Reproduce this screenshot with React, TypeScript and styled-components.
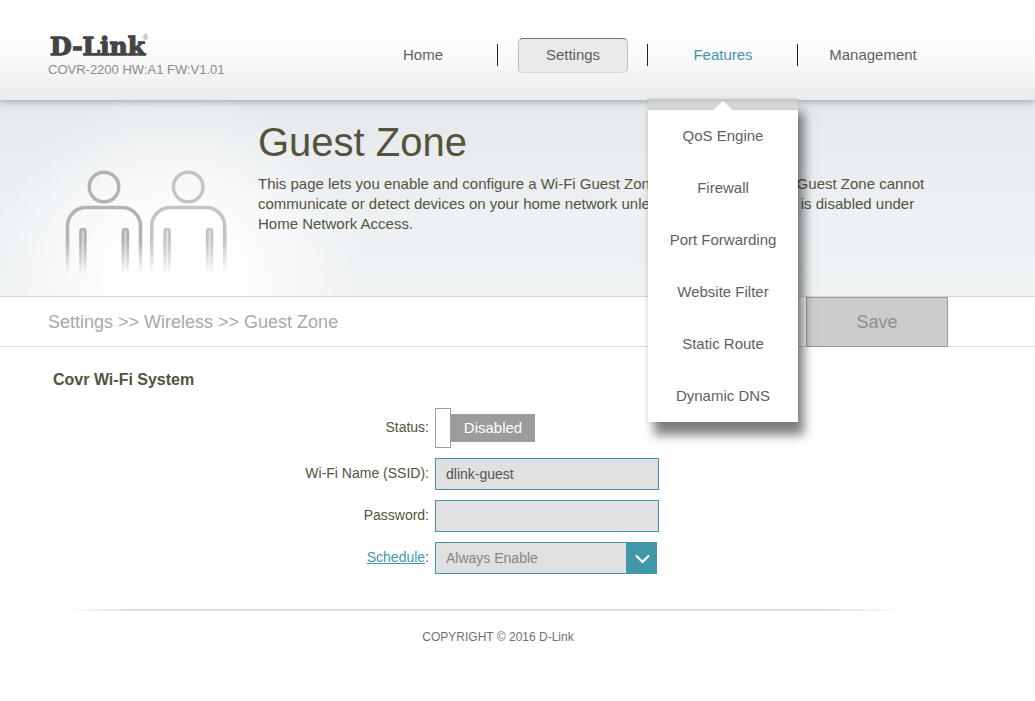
import React, { useState } from "react";
import styled, { createGlobalStyle } from "styled-components";

const TEAL = "#4297a9";
const OLIVE = "#54533c";

const GlobalStyle = createGlobalStyle`
  *, *::before, *::after { box-sizing: border-box; }
  body {
    margin: 0;
    background: #fff;
    color: ${OLIVE};
    font-family: "Liberation Sans", Arial, Helvetica, sans-serif;
    font-size: 14px;
  }
`;

const Inner = styled.div`
  max-width: 948px;
  padding-left: 48px;
`;

const Header = styled.header`
  position: relative;
  z-index: 2;
  background: linear-gradient(#fff 30%, #f9f9f9 60%, #ebebeb);
  box-shadow: 0 0 8px rgba(60, 70, 70, 0.6);
`;

const HeaderRow = styled(Inner)`
  display: flex;
  justify-content: space-between;
  height: 100px;
`;

const Brand = styled.div`
  padding-top: 28px;
`;

const Logo = styled.svg`
  display: block;
  width: 110px;
  height: 32px;
  overflow: visible;
`;

const Version = styled.div`
  color: #8c8c8c;
  font-size: 13px;
  line-height: 20px;
`;

const NavList = styled.ul`
  display: flex;
  margin: 0;
  padding: 38px 0 0;
  list-style: none;
`;

const NavItem = styled.li`
  position: relative;
  display: flex;
  justify-content: center;
  width: 150px;
  height: 35px;

  & + &::before {
    content: "";
    position: absolute;
    left: -1px;
    top: 6px;
    width: 1px;
    height: 22px;
    background: #222;
  }
`;

const NavLink = styled.a<{ $state?: "current" | "open" }>`
  width: 110px;
  height: 35px;
  border: 1px solid transparent;
  border-radius: 5px;
  color: ${(p) => (p.$state === "open" ? TEAL : "#5f5f5f")};
  font-size: 15px;
  line-height: 31px;
  text-align: center;
  text-decoration: none;
  ${(p) =>
    p.$state === "current" &&
    `background: #e9ebea;
     border-color: #707070 #bdbdbd #d8d8d8;`}
`;

const Menu = styled.div`
  position: absolute;
  top: 61px;
  left: 0;
  width: 150px;
  padding-top: 11px;
  background: linear-gradient(#c0c4c4, #d9dcdd 7px, #cdd0d1 11px);
  box-shadow: 6px 13px 10px rgba(0, 0, 0, 0.5), 0 0 4px rgba(0, 0, 0, 0.1);

  &::before {
    content: "";
    position: absolute;
    top: 2px;
    left: 64px;
    border: solid transparent;
    border-width: 0 11px 10px;
    border-bottom-color: #fff;
  }
`;

const MenuList = styled.ul`
  margin: 0;
  padding: 0;
  background: #fff;
  list-style: none;
`;

const MenuLink = styled.a`
  display: block;
  color: #5f5f5f;
  font-size: 15px;
  line-height: 52px;
  text-align: center;
  text-decoration: none;
`;

const Hero = styled.section`
  background:
    radial-gradient(ellipse 190px 190px at 175px 180px, #fff 25%, rgba(255, 255, 255, 0) 100%),
    linear-gradient(#e5e9eb, #edf1f4 60%, #eff2f3);
`;

const HeroRow = styled(Inner)`
  display: grid;
  grid-template-columns: 210px 1fr;
  min-height: 196px;
`;

const Guests = styled.svg`
  width: 190px;
  height: 120px;
  margin-top: 60px;
`;

const Title = styled.h1`
  margin: 18px 0 8px;
  font-size: 40px;
  font-weight: 400;
  line-height: 48px;
`;

const Intro = styled.p`
  margin: 0;
  font-size: 15px;
  line-height: 20px;
`;

const CrumbBar = styled.div`
  height: 51px;
  border-top: 1px solid #cfd6d5;
  border-bottom: 1px solid #dcdcdc;
`;

const CrumbRow = styled(Inner)`
  display: flex;
  justify-content: space-between;
`;

const Crumbs = styled.nav`
  color: #a9a9a9;
  font-size: 18px;
  line-height: 50px;
`;

const SaveButton = styled.button`
  width: 142px;
  height: 50px;
  border: 1px solid #9b9b9b;
  background: #ccc;
  color: #8e8e8e;
  font-family: inherit;
  font-size: 18px;
`;

const Form = styled.form`
  padding: 24px 0 0 5px;
`;

const FormTitle = styled.h2`
  margin: 0 0 19px;
  font-size: 16px;
  line-height: 18px;
`;

const Fields = styled.div`
  display: grid;
  grid-template-columns: 376px 1fr;
  align-items: center;
  gap: 10px 6px;
`;

const FieldLabel = styled.label`
  padding-bottom: 2px;
  line-height: 18px;
  text-align: right;
`;

const HelpLink = styled.a`
  color: ${TEAL};
`;

const Toggle = styled.div`
  display: flex;
  align-items: center;
`;

const Knob = styled.input`
  appearance: none;
  width: 16px;
  height: 40px;
  margin: 0;
  border: 1px solid #a0a0a0;
  background: #fff;
`;

const Track = styled.span`
  width: 84px;
  background: #9c9c9c;
  color: #fff;
  font-size: 15px;
  line-height: 28px;
  text-align: center;
`;

const TextInput = styled.input`
  width: 224px;
  height: 32px;
  padding: 0 10px;
  border: 1px solid ${TEAL};
  border-radius: 0;
  background: #e0e0e0;
  color: #54544e;
  font: inherit;
`;

const SelectBox = styled.div`
  display: flex;
  width: 222px;
  height: 32px;
  border: 1px solid ${TEAL};
  background: linear-gradient(to left, ${TEAL} 30px, #e0e0e0 30px);
`;

const Select = styled.select`
  appearance: none;
  flex: 1;
  padding: 0 10px;
  border: 0;
  background: transparent;
  color: #858585;
  font: inherit;
`;

const Chevron = styled.svg`
  width: 30px;
  height: 30px;
`;

const Footer = styled.footer`
  margin-top: 35px;
  color: #6f6f6f;
  font-size: 12px;
  line-height: 16px;
  text-align: center;

  &::before {
    content: "";
    display: block;
    height: 2px;
    margin: 0 40px 18px 17px;
    background: linear-gradient(to right, transparent, #dedede 8%, #dedede 90%, transparent);
  }
`;

const featureLinks = [
  "QoS Engine",
  "Firewall",
  "Port Forwarding",
  "Website Filter",
  "Static Route",
  "Dynamic DNS",
];

function Person({ x, color, fade }: { x: number; color: string; fade: string }) {
  return (
    <g transform={`translate(${x} 0)`} fill="none">
      <circle cx="39.5" cy="27" r="14.8" stroke={color} strokeWidth="3.4" />
      <g stroke={`url(#${fade})`} strokeWidth="3.6">
        <path d="M3 114V66A18.500 18.500 0 0 1 21.500 47.500H57.500A18.500 18.500 0 0 1 76 66V114" />
        <g strokeWidth="2.8" fill={`url(#${fade})`} fillOpacity="0.5">
          <path d="M16 114V71.500A2.400 2.400 0 0 1 20.800 71.500V114" />
          <path d="M58.500 114V71.500A2.400 2.400 0 0 1 63.300 71.500V114" />
        </g>
      </g>
      <defs>
        <linearGradient id={fade} gradientUnits="userSpaceOnUse" x1="0" y1="46" x2="0" y2="114">
          <stop offset="0" stopColor={color} />
          <stop offset="0.5" stopColor={color} />
          <stop offset="1" stopColor={color} stopOpacity="0" />
        </linearGradient>
      </defs>
    </g>
  );
}

export default function App() {
  const [ssid, setSsid] = useState("dlink-guest");
  const [password, setPassword] = useState("");
  const [enabled, setEnabled] = useState(false);

  return (
    <>
      <GlobalStyle />
      <Header>
        <HeaderRow>
          <Brand>
            <Logo viewBox="0 0 110 32" role="img" aria-label="D-Link">
              <text
                x="2"
                y="27"
                fill="#444"
                stroke="#444"
                strokeWidth="1.3"
                fontFamily="DejaVu Serif, serif"
                fontWeight="700"
                fontSize="25"
              >
                D-Link
              </text>
              <text x="95" y="12" fill="#777" fontSize="7">
                ®
              </text>
            </Logo>
            <Version>COVR-2200 HW:A1 FW:V1.01</Version>
          </Brand>
          <nav aria-label="Main">
            <NavList>
              <NavItem>
                <NavLink href="#home">Home</NavLink>
              </NavItem>
              <NavItem>
                <NavLink href="#settings" $state="current">
                  Settings
                </NavLink>
              </NavItem>
              <NavItem>
                <NavLink href="#features" $state="open">
                  Features
                </NavLink>
                <Menu>
                  <MenuList>
                    {featureLinks.map((name) => (
                      <li key={name}>
                        <MenuLink href="#features">{name}</MenuLink>
                      </li>
                    ))}
                  </MenuList>
                </Menu>
              </NavItem>
              <NavItem>
                <NavLink href="#management">Management</NavLink>
              </NavItem>
            </NavList>
          </nav>
        </HeaderRow>
      </Header>

      <Hero>
        <HeroRow>
          <Guests viewBox="0 0 190 120" aria-hidden="true">
            <Person x={16.5} color="#b2b2b2" fade="fadeFront" />
            <Person x={100.7} color="#c4c4c4" fade="fadeBack" />
          </Guests>
          <div>
            <Title>Guest Zone</Title>
            <Intro>
              This page lets you enable and configure a Wi-Fi Guest Zone. Devices joining the Guest
              Zone cannot communicate or detect devices on your home network unless Internet Only
              Mode is disabled under Home Network Access.
            </Intro>
          </div>
        </HeroRow>
      </Hero>

      <CrumbBar>
        <CrumbRow>
          <Crumbs aria-label="Breadcrumb">Settings &gt;&gt; Wireless &gt;&gt; Guest Zone</Crumbs>
          <SaveButton type="submit" form="guest-zone">
            Save
          </SaveButton>
        </CrumbRow>
      </CrumbBar>

      <Inner>
        <Form id="guest-zone" onSubmit={(e) => e.preventDefault()}>
          <FormTitle>Covr Wi-Fi System</FormTitle>
          <Fields>
            <FieldLabel htmlFor="status">Status:</FieldLabel>
            <Toggle>
              <Knob
                id="status"
                type="checkbox"
                checked={enabled}
                onChange={(e) => setEnabled(e.target.checked)}
              />
              <Track>{enabled ? "Enabled" : "Disabled"}</Track>
            </Toggle>

            <FieldLabel htmlFor="ssid">Wi-Fi Name (SSID):</FieldLabel>
            <TextInput id="ssid" value={ssid} onChange={(e) => setSsid(e.target.value)} />

            <FieldLabel htmlFor="password">Password:</FieldLabel>
            <TextInput
              id="password"
              type="password"
              value={password}
              onChange={(e) => setPassword(e.target.value)}
            />

            <FieldLabel htmlFor="schedule">
              <HelpLink href="#schedule">Schedule</HelpLink>:
            </FieldLabel>
            <SelectBox>
              <Select id="schedule">
                <option>Always Enable</option>
              </Select>
              <Chevron viewBox="0 0 30 30" aria-hidden="true">
                <path d="M10 12.500L16.500 19L23 12.500" fill="none" stroke="#fff" strokeWidth="2.2" />
              </Chevron>
            </SelectBox>
          </Fields>
        </Form>
        <Footer>COPYRIGHT © 2016 D-Link</Footer>
      </Inner>
    </>
  );
}
